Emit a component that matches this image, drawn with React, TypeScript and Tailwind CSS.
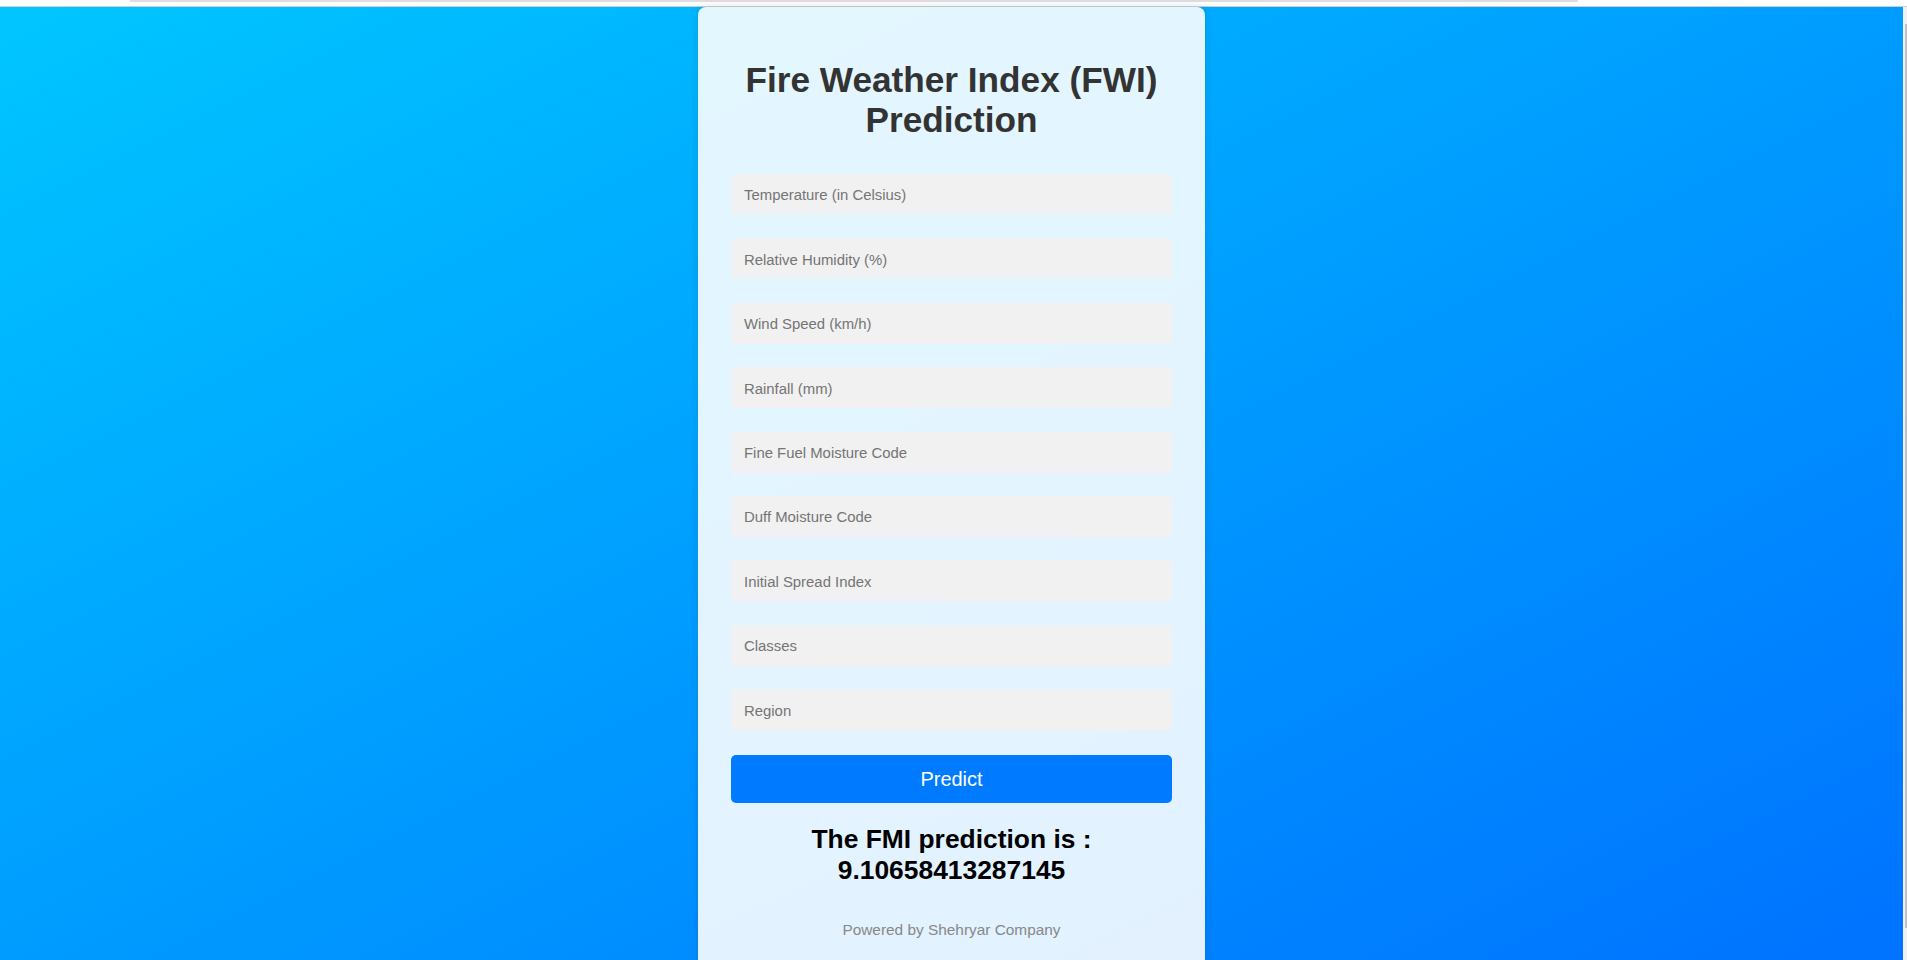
import React from "react";

const fields = [
  "Temperature (in Celsius)",
  "Relative Humidity (%)",
  "Wind Speed (km/h)",
  "Rainfall (mm)",
  "Fine Fuel Moisture Code",
  "Duff Moisture Code",
  "Initial Spread Index",
  "Classes",
  "Region",
];

export default function App() {
  return (
    <div className="h-[960px] overflow-hidden flex flex-col font-['Liberation_Sans',Arial,sans-serif]">
      <div className="h-[7px] shrink-0 bg-white border-b border-[#cfcfcf] pl-[130px]">
        <div className="w-[1448px] h-[2px] bg-[#dedede]" />
      </div>
      <div className="flex flex-1 min-h-0">
        <div className="flex-1 flex justify-center bg-[linear-gradient(to_bottom_right,#00c6ff,#0072ff)]">
          <div className="w-[507px] h-[1100px] shrink-0 bg-white/[0.89] rounded-t-[8px] shadow-[0_0_10px_rgba(0,0,0,0.12)] px-[33px] pt-[52.6px]">
            <h1 className="text-center text-[35.2px] leading-[40.5px] font-bold text-[#333333]">
              Fire Weather Index (FWI)
              <br />
              Prediction
            </h1>
            <form
              className="mt-[33.4px] flex flex-col"
              onSubmit={(e) => e.preventDefault()}
            >
              {fields.map((f) => (
                <input
                  key={f}
                  type="text"
                  placeholder={f}
                  className="w-full h-[41px] shrink-0 mb-[23.4px] last:mb-0 rounded-[5px] bg-[#f1f1f1] pl-[13px] pt-[2px] text-[14.9px] text-[#333] placeholder:text-[#757575] outline-none"
                />
              ))}
              <button
                type="submit"
                className="mt-[1.4px] w-full h-[48px] rounded-[5px] bg-[#007bff] text-white text-[20px]"
              >
                Predict
              </button>
            </form>
            <h2 className="mt-[21.5px] text-center text-[26.4px] leading-[31px] font-bold text-black">
              The FMI prediction is :
              <br />
              9.10658413287145
            </h2>
            <p className="mt-[34.7px] text-center text-[15.4px] leading-[17.25px] text-[#888888]">
              Powered by Shehryar Company
            </p>
          </div>
        </div>
        <div className="w-[4px] shrink-0 bg-[#f1f1f1] pt-[17px] pl-[2px]">
          <div className="h-[904px] bg-[#c1c1c1]" />
        </div>
      </div>
    </div>
  );
}
